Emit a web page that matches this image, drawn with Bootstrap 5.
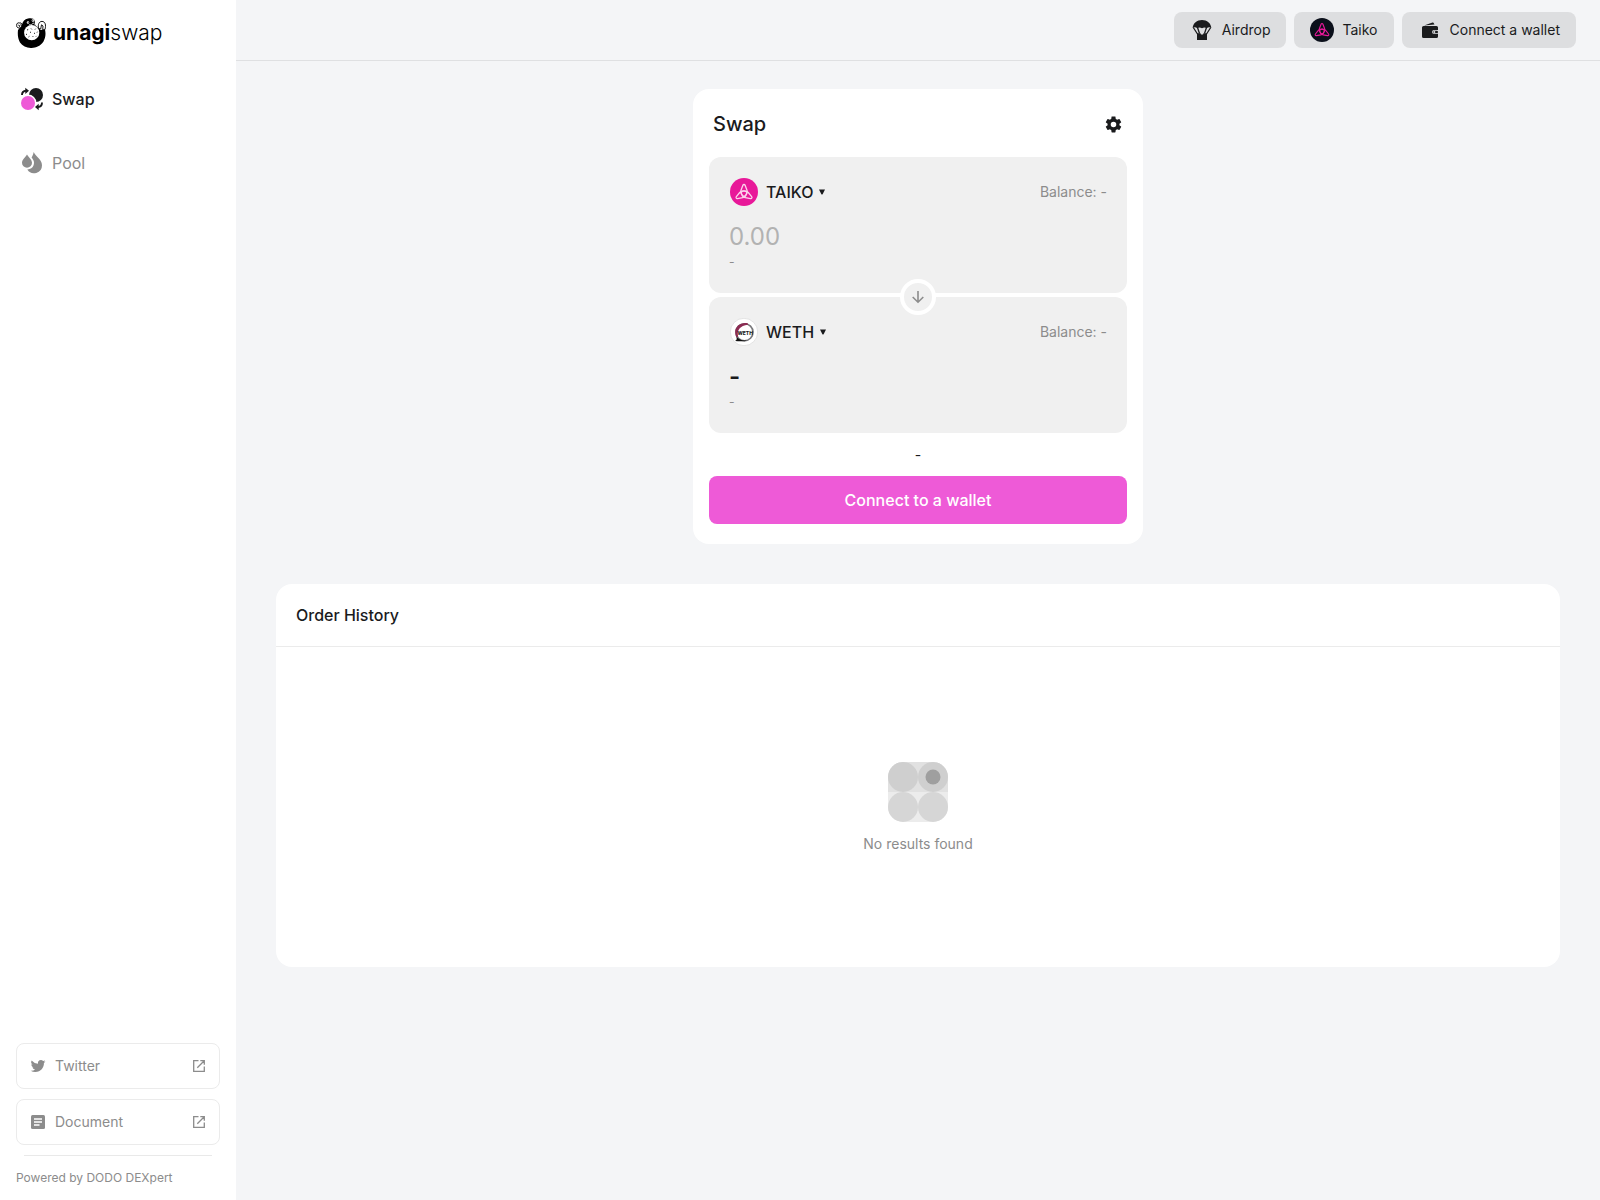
<!DOCTYPE html>
<html lang="en">
<head>
<meta charset="utf-8">
<meta name="viewport" content="width=device-width, initial-scale=1">
<title>unagiswap</title>
<link rel="stylesheet" href="https://cdn.jsdelivr.net/npm/bootstrap@5.3.0/dist/css/bootstrap.min.css">
<style>
  :root { --ink: #1a1b1d; --soft: #8c8c8c; --pale: #f0f0f0; --pink: #ee5ad7; }
  body { font-family: Inter, "Open Sans", sans-serif; color: var(--ink); background: #f4f5f7; font-size: 14px; line-height: 20px; }
  svg { display: block; flex: none; }
  a { color: inherit; text-decoration: none; }
  .side { flex: 0 0 236px; padding: 16px; background: #fff; }
  .brand-link { gap: 7px; height: 34px; color: #000; }
  .wordmark { font-size: 21px; line-height: 30px; font-weight: 300; }
  .wordmark b { font-weight: 700; }
  .side-nav { gap: 40px; margin-top: 37px; }
  .side-nav a { gap: 8px; padding: 0 4px; height: 24px; font-size: 16px; color: var(--soft); }
  .side-nav a.current { color: var(--ink); font-weight: 500; }
  .ext-links { gap: 10px; }
  .ext-link { gap: 9px; height: 46px; padding: 0 13px; border: 1px solid #ebebeb; border-radius: 8px; color: var(--soft); }
  .side-rule { height: 1px; margin: 0 8px; background: #e9e9e9; }
  .credit { font-size: 12px; line-height: 16px; color: var(--soft); margin: 4px 0 -2px; }
  .topbar { height: 61px; padding: 0 24px; border-bottom: 1px solid #dfe0e2; }
  .top-btn { gap: 8px; height: 36px; padding: 0 16px; border: 0; border-radius: 8px; background: #dddee0; color: var(--ink); font-size: 14px; line-height: 20px; }
  .content-area { padding: 28px 40px; gap: 40px; }
  .swap-card { width: 100%; max-width: 450px; padding: 0 16px 20px; border-radius: 16px; background: #fff; }
  .swap-head { height: 68px; padding: 2px 4px 0; }
  .swap-head h1 { font-size: 20px; line-height: 24px; font-weight: 500; margin: 0; }
  .plain-btn { padding: 0; border: 0; background: none; color: var(--ink); }
  .token-panel { padding: 20px 20px 23px; border-radius: 12px; background: var(--pale); }
  .token-btn { gap: 6px; height: 30px; font-size: 16px; font-weight: 500; }
  .token-logo { margin: 0 2px 0 1px; }
  .balance { color: var(--soft); }
  .amount { display: block; width: 100%; height: 34px; margin-top: 13px; padding: 0; border: 0; outline: 0; background: none; color: var(--ink); font-size: 24px; line-height: 34px; }
  .amount::placeholder { color: #b2b2b2; opacity: 1; }
  .amount-out { font-weight: 600; }
  .fiat { font-size: 12px; line-height: 16px; color: var(--soft); }
  .flip-btn { width: 36px; height: 36px; padding: 0; border: 4px solid #fff; border-radius: 50%; background: var(--pale); color: var(--soft); }
  .rate { line-height: 43px; }
  .connect-btn { height: 48px; border: 0; border-radius: 8px; background: var(--pink); color: #fff; font-size: 16px; font-weight: 500; }
  .history { border-radius: 16px; background: #fff; }
  .history h2 { margin: 0; padding: 19px 20px; border-bottom: 1px solid #ebebeb; font-size: 16px; line-height: 24px; font-weight: 500; }
  .empty-state { min-height: 320px; padding-top: 1px; gap: 12px; color: var(--soft); }
</style>
<script src="https://cdn.jsdelivr.net/npm/bootstrap@5.3.0/dist/js/bootstrap.bundle.min.js"></script>
</head>
<body>
<svg width="0" height="0" class="position-absolute" aria-hidden="true">
  <defs>
    <path id="lobe" d="M12.900 7.300C13.300 6.200 14.700 6.200 15.100 7.300L17 12.300C17.900 14.800 16.500 17 14 18.600C11.500 17 10.100 14.800 11 12.300Z"/>
    <symbol id="knot" viewBox="0 0 28 28">
      <g fill="none" stroke="currentColor" stroke-width="1.300" stroke-linejoin="round">
        <use href="#lobe"/>
        <use href="#lobe" transform="rotate(120 14 15.500)"/>
        <use href="#lobe" transform="rotate(240 14 15.500)"/>
      </g>
    </symbol>
    <symbol id="outward" viewBox="0 0 14 14">
      <path d="M6.500 1.700H1.700v10.600h10.600V7.500M8.300 1.700h4v4M12 2 5.300 8.700" fill="none" stroke="currentColor" stroke-width="1.300"/>
    </symbol>
    <symbol id="caret" viewBox="0 0 6 6"><path d="M0 .5h6L3.600 5.200Q3 6 2.400 5.200z" fill="currentColor"/></symbol>
  </defs>
</svg>

<div class="d-flex min-vh-100">
  <aside class="side d-flex flex-column">
    <a href="#" class="brand-link d-flex align-items-center">
      <svg width="30" height="30" viewBox="0 0 30 30" aria-hidden="true">
        <path d="M2 12C3.500 10 5 9 6 6.500C7 3 8.500 1 12 .5C15-.3 18 .3 18.600 2.500C19.200 5 18.500 7 20 8C22 9 23.500 11 24.500 12L29 11.500C30 16 29.500 20 27.500 23.500C22 32 9 32 4 24.500C1.800 21 1.500 16 2 12z" fill="#000"/>
        <circle cx="15.700" cy="14.700" r="7.600" fill="#fff"/>
        <path d="M.7 7.500C.3 5.500 2 4.300 3.700 5C5.500 4.500 6.500 6.300 5.500 7.500C5.800 9.500 3.800 10.500 2.300 9.800C1.200 9.600.5 8.600.7 7.500z" fill="#fff" stroke="#000" stroke-width="1"/>
        <path d="M2 7l1.700.6L5 6.500M3.500 9V7.500" fill="none" stroke="#000" stroke-width=".7"/>
        <path d="M22.700 10.500C21.500 7 23 3.300 26 3.400C29.300 3.500 30.200 7 29 11.500L26.700 11.800L27 8L25.500 6.800L24.700 11z" fill="#fff" stroke="#000" stroke-width=".9"/>
        <circle cx="12" cy="4.500" r="1.200" fill="#fff"/><circle cx="17" cy="2.500" r="1.300" fill="#fff"/>
        <circle cx="12.200" cy="4.500" r=".5"/><circle cx="16.800" cy="2.600" r=".5"/>
        <path d="M13 6.800C14.800 7 16.500 6.300 17.500 4.800L18.500 6.500" fill="none" stroke="#fff" stroke-width=".8"/>
        <path d="M11 12l1.200-.5M15 10.500l.8.900M19 11.500l.7-.8M10 16l1 .7M14 14.500l1-.5M18 15l1 .6M21 14.500l.6-.8M12.500 19l.9-.6M16.500 18l.7.800M20 18.500l.6-.6" stroke="#000" stroke-width=".9"/>
      </svg>
      <span class="wordmark"><b>unagi</b>swap</span>
    </a>

    <nav class="side-nav d-flex flex-column">
      <a href="#" class="current d-flex align-items-center" aria-current="page">
        <svg width="24" height="24" viewBox="0 0 24 24" aria-hidden="true">
          <circle cx="16" cy="8" r="7" fill="#1a1b1d"/>
          <circle cx="8" cy="16" r="8.500" fill="#fff"/>
          <circle cx="8" cy="16" r="7" fill="#ee5ad7"/>
          <path d="M2 8c0-2.500 1.200-4 4-4.200" fill="none" stroke="#1a1b1d" stroke-width="1.900"/>
          <path d="M5.300.8 9 3.700 5.300 7zM18.700 16.800 15 20l3.700 3.200z" fill="#1a1b1d"/>
          <path d="M22 15.500c0 2.700-1.200 4.300-4 4.500" fill="none" stroke="#1a1b1d" stroke-width="1.900"/>
        </svg>
        <span>Swap</span>
      </a>
      <a href="#" class="d-flex align-items-center">
        <svg width="24" height="24" viewBox="0 0 24 24" fill="currentColor" aria-hidden="true">
          <path d="M7 3.500c1.500 2.900 5 5.100 5 8.300a5 5 0 0 1-10 0C2 8.600 5.500 6.400 7 3.500z"/>
          <path d="M13.700 1c1.600 4.300 8.300 7.200 8.300 13.200A8 8 0 0 1 7.300 18.600c4.200-.3 6.700-3.200 6.700-6.800 0-2.200-1.100-3.800-2.400-5.300.9-1.500 1.700-3.300 2.100-5.500z"/>
        </svg>
        <span>Pool</span>
      </a>
    </nav>

    <div class="ext-links d-flex flex-column mt-auto">
      <a href="#" class="ext-link d-flex align-items-center">
        <svg width="16" height="16" viewBox="0 0 24 24" fill="currentColor" aria-hidden="true"><path d="M23.200 5.100c-.8.400-1.700.6-2.600.7.900-.6 1.600-1.400 2-2.500-.9.500-1.900.9-2.900 1.100a4.600 4.600 0 0 0-7.800 4.200A13 13 0 0 1 2.500 3.800a4.600 4.600 0 0 0 1.400 6.100c-.7 0-1.400-.2-2-.6v.1c0 2.200 1.500 4.100 3.600 4.500-.7.200-1.400.2-2 .1.600 1.800 2.200 3.100 4.200 3.200A9.200 9.200 0 0 1 1 19a13 13 0 0 0 7 2c8.300 0 13.100-7 12.900-13.600.9-.6 1.700-1.400 2.300-2.300z"/></svg>
        <span>Twitter</span>
        <svg class="ms-auto" width="14" height="14" aria-hidden="true"><use href="#outward"/></svg>
      </a>
      <a href="#" class="ext-link d-flex align-items-center">
        <svg width="16" height="16" viewBox="0 0 16 16" aria-hidden="true"><rect x="1" y="1" width="14" height="14" rx="1.500" fill="currentColor"/><path d="M4 5h8M4 8h8M4 11h5.500" stroke="#fff" stroke-width="1.400"/></svg>
        <span>Document</span>
        <svg class="ms-auto" width="14" height="14" aria-hidden="true"><use href="#outward"/></svg>
      </a>
      <div class="side-rule"></div>
      <p class="credit">Powered by DODO DEXpert</p>
    </div>
  </aside>

  <div class="flex-grow-1 d-flex flex-column">
    <header class="topbar d-flex align-items-center justify-content-end gap-2">
      <button type="button" class="top-btn d-flex align-items-center">
        <svg width="24" height="24" viewBox="0 0 24 24" aria-hidden="true">
          <path d="M2.700 10C3 5 7 2 12 2s9 3 9.300 8c-1.400-1-3.100-1-4.600.3-1.500-1.200-3-1.200-4.700 0-1.700-1.200-3.200-1.200-4.700 0C5.800 9 4.100 9 2.700 10z" fill="#1a1b1d"/>
          <path d="M3.300 9.500l4.500 7M20.700 9.500l-4.500 7M7.500 9.500l2 6M16.500 9.500l-2 6" stroke="#1a1b1d" stroke-width="1.300"/>
          <path d="M7 15.300h3.500l.5 1.200h2l.5-1.200H17V22H7z" fill="#1a1b1d"/>
        </svg>
        <span>Airdrop</span>
      </button>
      <button type="button" class="top-btn d-flex align-items-center">
        <svg width="24" height="24" viewBox="0 0 28 28" color="#e81899" aria-hidden="true"><circle cx="14" cy="14" r="14" fill="#0b101b"/><use href="#knot"/></svg>
        <span>Taiko</span>
      </button>
      <button type="button" class="top-btn d-flex align-items-center">
        <svg width="24" height="24" viewBox="0 0 24 24" aria-hidden="true">
          <path d="M6 7.500 14.500 4.600q1-.3 1.300.6l.7 1.300z" fill="#1a1b1d"/>
          <path d="M5.500 8H18.500Q20 8 20 9.500V12h-4a1.900 1.900 0 0 0 0 3.800h4v2.600q0 1.600-1.600 1.600H5.600Q4 20 4 18.400V9.500Q4 8 5.500 8z" fill="#1a1b1d"/>
          <rect x="15" y="12.700" width="5" height="2.400" rx="1.200" fill="#1a1b1d"/><circle cx="16.300" cy="13.900" r="1" fill="#dddee0"/>
        </svg>
        <span>Connect a wallet</span>
      </button>
    </header>

    <main class="content-area d-flex flex-column">
      <section class="swap-card mx-auto">
        <div class="swap-head d-flex align-items-center justify-content-between">
          <h1>Swap</h1>
          <button type="button" class="plain-btn" aria-label="Settings">
            <svg width="19" height="19" viewBox="0 0 24 24" fill="currentColor" aria-hidden="true"><path d="M19.430 12.980c.04-.32.07-.64.07-.98s-.03-.66-.07-.98l2.110-1.650c.19-.15.240-.42.120-.64l-2-3.460c-.12-.22-.39-.3-.61-.22l-2.490 1c-.52-.4-1.080-.73-1.690-.98l-.38-2.650C14.460 2.180 14.250 2 14 2h-4c-.25 0-.46.18-.49.42l-.38 2.650c-.61.25-1.170.59-1.690.98l-2.490-1c-.23-.09-.49 0-.61.22l-2 3.460c-.13.220-.07.49.120.64l2.110 1.650c-.04.320-.07.65-.07.980s.03.66.07.98l-2.110 1.650c-.19.150-.24.420-.12.640l2 3.460c.120.220.390.300.610.220l2.490-1c.52.400 1.080.730 1.690.980l.38 2.650c.03.240.24.420.49.420h4c.25 0 .46-.18.49-.42l.38-2.650c.61-.25 1.170-.59 1.690-.98l2.490 1c.23.090.49 0 .61-.22l2-3.460c.12-.22.070-.49-.12-.64zM12 15.500A3.500 3.500 0 1 1 12 8.500a3.500 3.500 0 0 1 0 7z"/></svg>
          </button>
        </div>

        <div class="d-flex flex-column gap-1">
          <div class="token-panel">
            <div class="d-flex align-items-center justify-content-between">
              <button type="button" class="plain-btn token-btn d-flex align-items-center">
                <svg class="token-logo" width="28" height="28" viewBox="0 0 28 28" color="#fbd3ec" aria-hidden="true"><circle cx="14" cy="14" r="14" fill="#e81899"/><use href="#knot"/></svg>
                <span>TAIKO</span>
                <svg width="6" height="6" aria-hidden="true"><use href="#caret"/></svg>
              </button>
              <span class="balance">Balance: -</span>
            </div>
            <input class="amount" type="text" inputmode="decimal" placeholder="0.00" aria-label="TAIKO amount">
            <div class="fiat">-</div>
          </div>
          <div class="token-panel position-relative">
            <button type="button" class="flip-btn position-absolute top-0 start-50 translate-middle d-flex align-items-center justify-content-center" aria-label="Switch tokens">
              <svg width="14" height="14" viewBox="0 0 14 14" aria-hidden="true"><path d="M7 1v11M1.700 7 7 12.200 12.300 7" fill="none" stroke="currentColor" stroke-width="1.600"/></svg>
            </button>
            <div class="d-flex align-items-center justify-content-between">
              <button type="button" class="plain-btn token-btn d-flex align-items-center">
                <svg class="token-logo" width="28" height="28" viewBox="0 0 28 28" aria-hidden="true">
                  <circle cx="14" cy="14" r="13.700" fill="#fff" stroke="#d4d4d4" stroke-width=".6"/>
                  <circle cx="14.500" cy="14.200" r="8.500" fill="none" stroke="#77777a" stroke-width="1.600"/>
                  <path d="M18 5.500C12 3.500 5 8 5.200 14c0 2 .3 4 1.600 5.600l1.300-1C6.700 12 10 7.500 18 6.700z" fill="#8b2b52"/>
                  <path d="M6.300 18.500c2.500 3 6 4.500 10.500 3.900-2 1.300-8 .9-11.800.6 2-1 2-2.500 1.300-4.500z" fill="#111"/>
                  <text x="15.200" y="16.500" text-anchor="middle" font-family="Inter, sans-serif" font-size="5" font-weight="800" fill="#222">WETH</text>
                </svg>
                <span>WETH</span>
                <svg width="6" height="6" aria-hidden="true"><use href="#caret"/></svg>
              </button>
              <span class="balance">Balance: -</span>
            </div>
            <div class="amount amount-out">-</div>
            <div class="fiat">-</div>
          </div>
        </div>

        <div class="rate text-center">-</div>
        <button type="button" class="connect-btn w-100">Connect to a wallet</button>
      </section>

      <section class="history">
        <h2>Order History</h2>
        <div class="empty-state d-flex flex-column align-items-center justify-content-center">
          <svg width="60" height="60" viewBox="0 0 60 60" aria-hidden="true">
            <path d="M0 30V15A15 15 0 0 1 15 0h30a15 15 0 0 1 15 15v15z" fill="#e1e1e1"/>
            <path d="M0 30v15a15 15 0 0 0 15 15h30a15 15 0 0 0 15-15V30z" fill="#ececec"/>
            <circle cx="15" cy="15" r="15" fill="#cfcfcf"/><circle cx="45" cy="15" r="15" fill="#cfcfcf"/>
            <circle cx="15" cy="45" r="15" fill="#d6d6d6"/><circle cx="45" cy="45" r="15" fill="#d6d6d6"/>
            <circle cx="45" cy="15" r="7.500" fill="#9f9f9f"/>
          </svg>
          <span>No results found</span>
        </div>
      </section>
    </main>
  </div>
</div>
</body>
</html>
